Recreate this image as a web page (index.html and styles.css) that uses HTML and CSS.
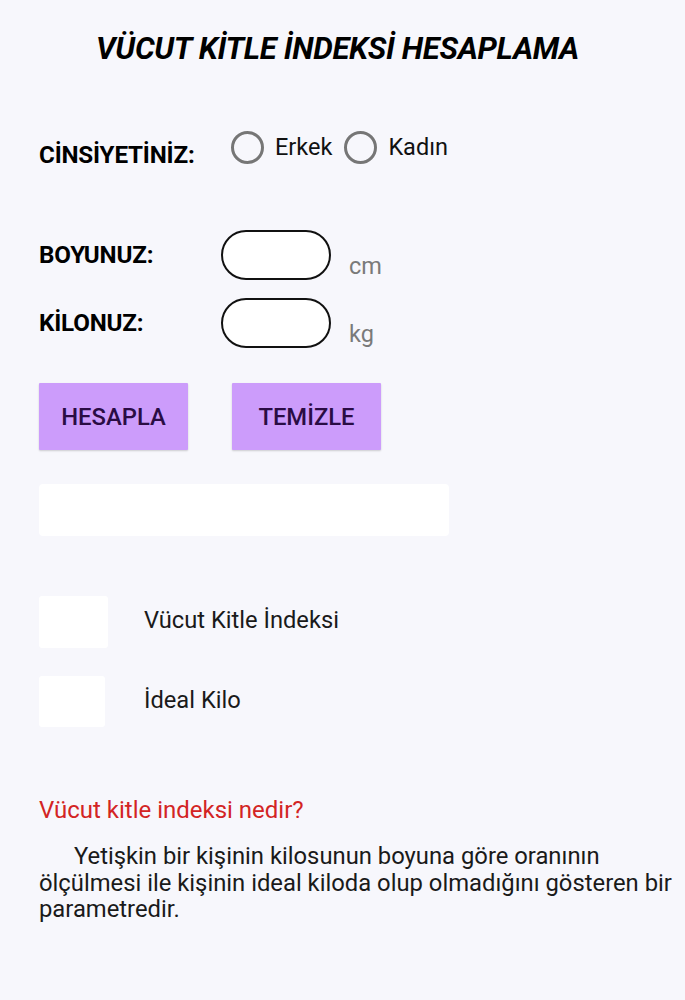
FILE: index.html
```html
<!DOCTYPE html>
<html lang="tr">
<head>
<meta charset="utf-8">
<title>Vücut Kitle İndeksi Hesaplama</title>
<link rel="stylesheet" href="styles.css">
</head>
<body>
<main class="page">
  <h1 class="title">VÜCUT KİTLE İNDEKSİ HESAPLAMA</h1>

  <div class="gender">
    <span class="label label-gender">CİNSİYETİNİZ:</span>
    <label class="radio"><span class="circle"></span><span class="radio-text">Erkek</span></label>
    <label class="radio"><span class="circle"></span><span class="radio-text">Kadın</span></label>
  </div>

  <div class="measure measure-first">
    <span class="label">BOYUNUZ:</span>
    <span class="field"></span>
    <span class="unit">cm</span>
  </div>
  <div class="measure">
    <span class="label">KİLONUZ:</span>
    <span class="field"></span>
    <span class="unit">kg</span>
  </div>

  <div class="buttons">
    <button class="btn">HESAPLA</button>
    <button class="btn">TEMİZLE</button>
  </div>

  <div class="result-box"></div>

  <div class="results">
    <div class="result-row">
      <span class="mini mini-a"></span>
      <span class="result-text">Vücut Kitle İndeksi</span>
    </div>
    <div class="result-row result-row-b">
      <span class="mini mini-b"></span>
      <span class="result-text">İdeal Kilo</span>
    </div>
  </div>

  <h2 class="info-title">Vücut kitle indeksi nedir?</h2>
  <p class="info-text">Yetişkin bir kişinin kilosunun boyuna göre oranının ölçülmesi ile kişinin ideal kiloda olup olmadığını gösteren bir parametredir.</p>
</main>
</body>
</html>
```

FILE: styles.css
```css
html, body {
  margin: 0;
  padding: 0;
  background: #f7f7fc;
}

body {
  font-family: Roboto, "Noto Sans", "Liberation Sans", sans-serif;
  color: #000;
}

.page {
  padding: 0 0 0 39px;
}

.title {
  margin: 0;
  padding: 32px 49px 0 0;
  font-size: 31px;
  line-height: 34px;
  font-weight: 700;
  font-style: italic;
  text-align: center;
  letter-spacing: -0.3px;
  color: #000;
}

.gender {
  margin-top: 64px;
  display: flex;
  align-items: flex-start;
  height: 34px;
}

.label {
  font-size: 24.2px;
  font-weight: 700;
  line-height: 34px;
  color: #000;
  letter-spacing: -0.2px;
}

.label-gender {
  width: 192px;
  padding-top: 8px;
}

.radio {
  display: flex;
  align-items: center;
  height: 34px;
  margin-right: 12px;
}

.circle {
  box-sizing: border-box;
  width: 33px;
  height: 33px;
  border: 3px solid #767676;
  border-radius: 50%;
  margin-right: 11px;
}

.radio-text {
  font-size: 23.5px;
  line-height: 34px;
  color: #111;
}

.measure {
  display: grid;
  grid-template-columns: 164px 110px auto;
  column-gap: 18px;
  height: 50px;
  margin-top: 18px;
  align-items: center;
}

.measure-first {
  margin-top: 66px;
}

.field {
  box-sizing: border-box;
  height: 50px;
  background: #fff;
  border: 2px solid #111;
  border-radius: 25px;
}

.unit {
  align-self: end;
  font-size: 23.5px;
  line-height: 27px;
  color: #7a7a7a;
}

.buttons {
  display: flex;
  gap: 44px;
  margin-top: 35px;
}

.btn {
  width: 149px;
  height: 67px;
  border: none;
  border-radius: 1px;
  background: #cc9cfb;
  box-shadow: 0 1px 2px rgba(0, 0, 0, 0.18);
  font-family: Roboto, "Noto Sans", sans-serif;
  font-size: 23.8px;
  font-weight: 500;
  color: #2a0c44;
  padding: 0;
}

.result-box {
  margin-top: 34px;
  width: 410px;
  height: 52px;
  background: #fff;
  border-radius: 4px;
}

.results {
  margin-top: 60px;
}

.result-row {
  display: grid;
  grid-template-columns: 105px auto;
  align-items: center;
}

.result-row-b {
  margin-top: 28px;
}

.mini {
  background: #fff;
  border-radius: 3px;
}

.mini-a {
  width: 69px;
  height: 52px;
}

.mini-b {
  width: 66px;
  height: 51px;
}

.result-text {
  font-size: 23.7px;
  line-height: 28px;
  color: #1a1a1a;
  position: relative;
  top: -2px;
}

.info-title {
  margin: 70px 0 0;
  font-size: 24px;
  line-height: 27px;
  font-weight: 400;
  color: #d32424;
}

.info-text {
  margin: 19px 0 0;
  font-size: 23.8px;
  line-height: 26.5px;
  color: #1a1a1a;
  text-indent: 35px;
}
```
